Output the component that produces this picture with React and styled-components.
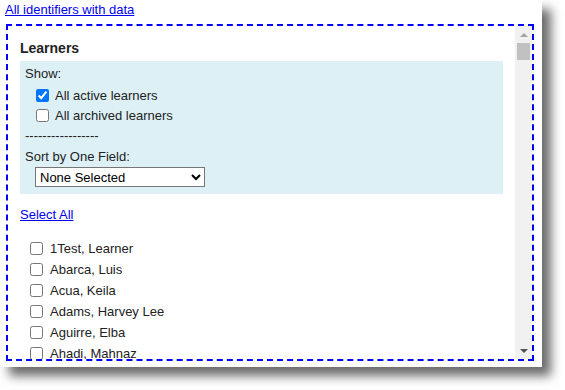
import React from "react";
import styled, { createGlobalStyle } from "styled-components";

const GlobalStyle = createGlobalStyle`
  html, body { margin: 0; padding: 0; background: #ffffff; }
  body {
    font-family: "Liberation Sans", Arial, sans-serif;
    font-size: 13px;
    color: #222222;
  }
`;

const Page = styled.div`
  width: 565px;
  height: 390px;
  overflow: hidden;
`;

const Frame = styled.div`
  width: 542px;
  height: 367px;
  box-sizing: border-box;
  background: #ffffff;
  box-shadow: 9px 9px 10px rgba(0, 0, 0, 0.58);
  padding: 2px 0 0 5px;
  display: flex;
  flex-direction: column;
  align-items: flex-start;
`;

const Link = styled.a`
  color: #0000ee;
  text-decoration: underline;
  line-height: 15px;
  cursor: pointer;
`;

const Box = styled.div`
  margin: 7px 0 0 1px;
  width: 528px;
  height: 337px;
  box-sizing: border-box;
  border: 2px dashed #0000ff;
  display: flex;
`;

const Content = styled.div`
  flex: 1;
  min-width: 0;
  overflow: hidden;
  padding: 14px 12px 0;
`;

const Title = styled.div`
  font-size: 14px;
  font-weight: bold;
  line-height: 16px;
  color: #222222;
  margin-bottom: 5px;
`;

const Panel = styled.div`
  background: #ddf0f5;
  padding: 5px 5px 7px;
`;

const Line = styled.div`
  line-height: 15px;
  margin-top: ${(p) => p.$mt || 0}px;
`;

const Options = styled.div`
  margin-top: 4px;
`;

const Row = styled.label`
  display: flex;
  align-items: center;
  height: ${(p) => p.$h}px;
  padding-left: ${(p) => p.$indent}px;
`;

const Check = styled.input.attrs({ type: "checkbox" })`
  width: 13px;
  height: 13px;
  margin: 3px 3px 3px 4px;
  flex: none;
`;

const RowText = styled.span`
  margin-left: ${(p) => p.$gap}px;
  line-height: 15px;
`;

const Select = styled.select`
  display: block;
  margin: 3px 0 0 10px;
  width: 170px;
  height: 20px;
  font-family: "Liberation Sans", Arial, sans-serif;
  font-size: 13px;
  color: #000000;
  background: #ffffff;
`;

const SelectAll = styled(Link)`
  display: inline-block;
  margin-top: 13px;
`;

const List = styled.div`
  margin-top: 16px;
`;

const Scrollbar = styled.div`
  width: 17px;
  flex: none;
  background: #f1f1f1;
  display: flex;
  flex-direction: column;
`;

const ArrowButton = styled.div`
  height: 17px;
  display: flex;
  align-items: center;
  justify-content: center;
  &::before {
    content: "";
    width: 0;
    height: 0;
    border-left: 4px solid transparent;
    border-right: 4px solid transparent;
    ${(p) =>
      p.$dir === "up"
        ? `border-bottom: 4px solid ${p.$color};`
        : `border-top: 4px solid ${p.$color};`}
  }
`;

const Thumb = styled.div`
  height: 17px;
  margin: 0 2px;
  background: #c1c1c1;
`;

const Track = styled.div`
  flex: 1;
`;

const learners = [
  "1Test, Learner",
  "Abarca, Luis",
  "Acua, Keila",
  "Adams, Harvey Lee",
  "Aguirre, Elba",
  "Ahadi, Mahnaz",
];

export default function App() {
  return (
    <>
      <GlobalStyle />
      <Page>
        <Frame>
          <Link>All identifiers with data</Link>
          <Box>
            <Content>
              <Title>Learners</Title>
              <Panel>
                <Line>Show:</Line>
                <Options>
                  <Row $h={20} $indent={7}>
                    <Check defaultChecked />
                    <RowText $gap={3}>All active learners</RowText>
                  </Row>
                  <Row $h={20} $indent={7}>
                    <Check />
                    <RowText $gap={3}>All archived learners</RowText>
                  </Row>
                </Options>
                <Line $mt={3}>-----------------</Line>
                <Line $mt={6}>Sort by One Field:</Line>
                <Select defaultValue="none">
                  <option value="none">None Selected</option>
                </Select>
              </Panel>
              <SelectAll>Select All</SelectAll>
              <List>
                {learners.map((name) => (
                  <Row key={name} $h={21} $indent={6}>
                    <Check />
                    <RowText $gap={4}>{name}</RowText>
                  </Row>
                ))}
              </List>
            </Content>
            <Scrollbar>
              <ArrowButton $dir="up" $color="#a3a3a3" />
              <Thumb />
              <Track />
              <ArrowButton $dir="down" $color="#505050" />
            </Scrollbar>
          </Box>
        </Frame>
      </Page>
    </>
  );
}
